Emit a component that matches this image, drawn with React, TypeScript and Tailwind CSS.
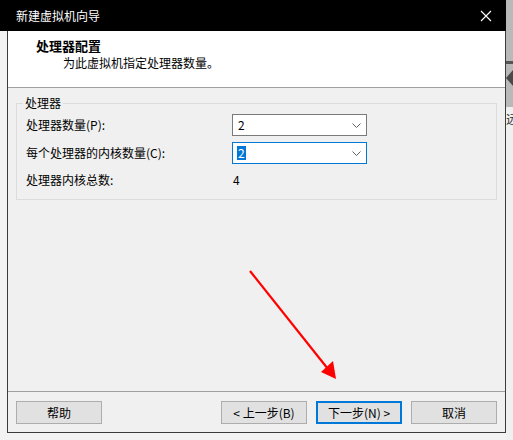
import React from "react";

const FONT = { fontFamily: '"Microsoft YaHei", "Noto Sans CJK SC", "Noto Sans", sans-serif' };

function Chevron() {
  return (
    <svg width="9" height="5" viewBox="0 0 9 5" className="shrink-0">
      <path d="M0.5 0.5 L4.5 4.5 L8.5 0.5" fill="none" stroke="#606060" strokeWidth="1" />
    </svg>
  );
}

function Select({ focused }: { focused?: boolean }) {
  return (
    <div
      className={
        "w-[135px] h-[22px] bg-white flex items-center justify-between pl-[4px] pr-[5px] border " +
        (focused ? "border-[#0078d7]" : "border-[#7a7a7a]")
      }
    >
      {focused ? (
        <span className="bg-[#0078d7] text-white leading-[14px] px-[1px]">2</span>
      ) : (
        <span className="leading-[14px] pl-[1px]">2</span>
      )}
      <Chevron />
    </div>
  );
}

function Button({ children, primary }: { children: React.ReactNode; primary?: boolean }) {
  return (
    <div
      className={
        "w-[86px] h-[23px] flex items-center justify-center bg-[#e1e1e1] text-[12px] text-black " +
        (primary ? "border-2 border-[#0078d7]" : "border border-[#adadad]")
      }
    >
      {children}
    </div>
  );
}

export default function App() {
  return (
    <div className="w-[513px] h-[440px] bg-[#f3f3f3] relative overflow-hidden flex text-[12px] text-black" style={FONT}>
      <div className="w-[506px] flex flex-col">
        {/* title bar */}
        <div className="h-[31px] bg-black flex items-center justify-between pl-[16px] pr-[14px] shrink-0">
          <span className="text-white text-[12px] leading-none">新建虚拟机向导</span>
          <svg width="12" height="12" viewBox="0 0 12 12">
            <path d="M1 1 L11 11 M11 1 L1 11" stroke="#ffffff" strokeWidth="1.1" />
          </svg>
        </div>
        <div className="flex">
          <div className="w-[7px] shrink-0" />
          {/* dialog body */}
          <div className="w-[499px] h-[402px] border-l border-r border-b border-[#3c3c3c] flex flex-col bg-[#f0f0f0]">
            {/* header */}
            <div className="h-[57px] bg-white border-b border-[#a0a0a0] pt-[7px] shrink-0">
              <div className="pl-[28px] font-bold leading-[16px] text-[13px]">处理器配置</div>
              <div className="pl-[55px] leading-[16px] mt-[1px]">为此虚拟机指定处理器数量。</div>
            </div>
            {/* content */}
            <div className="flex-1 pt-[15px] pl-[8px]">
              <div className="relative w-[481px] h-[97px] border border-[#dcdcdc] pt-[10px] pl-[9px]">
                <span className="absolute left-[6px] top-[-8px] px-[2px] bg-[#f0f0f0] leading-[14px]">处理器</span>
                <div className="flex items-center h-[22px]">
                  <span className="w-[206px] leading-[14px]">处理器数量(P):</span>
                  <Select />
                </div>
                <div className="flex items-center h-[22px] mt-[6px]">
                  <span className="w-[206px] leading-[14px]">每个处理器的内核数量(C):</span>
                  <Select focused />
                </div>
                <div className="flex items-center h-[22px] mt-[5px]">
                  <span className="w-[207px] leading-[14px]">处理器内核总数:</span>
                  <span className="leading-[14px]">4</span>
                </div>
              </div>
            </div>
            {/* footer */}
            <div className="h-[41px] border-t border-[#a0a0a0] shrink-0 flex items-start justify-between pt-[9px] px-[8px]">
              <Button>帮助</Button>
              <div className="flex gap-[9px]">
                <Button>&lt; 上一步(B)</Button>
                <Button primary>下一步(N) &gt;</Button>
                <Button>取消</Button>
              </div>
            </div>
          </div>
        </div>
      </div>
      {/* right strip (background window) */}
      <div className="w-[7px] flex flex-col overflow-hidden">
        <div className="h-[107px] bg-[#b9b9b9] flex flex-col items-start">
          <div className="mt-[61px] w-[7px] h-[3px] bg-[#555555]" />
          <div className="mt-[6px] w-0 h-0 border-y-[8px] border-y-transparent border-r-[7px] border-r-[#4a4a4a]" />
        </div>
        <div className="flex-1 bg-[#f0f0f0] pt-[5px]">
          <span className="block leading-[14px] text-[12px] text-[#333] whitespace-nowrap">远</span>
        </div>
      </div>
      {/* annotation arrow */}
      <svg className="absolute left-0 top-0 pointer-events-none" width="513" height="440">
        <line x1="250" y1="271" x2="328" y2="369" stroke="#ff0000" strokeWidth="2.2" />
        <polygon points="321,372 336,379 333,361" fill="#ff0000" />
      </svg>
    </div>
  );
}
